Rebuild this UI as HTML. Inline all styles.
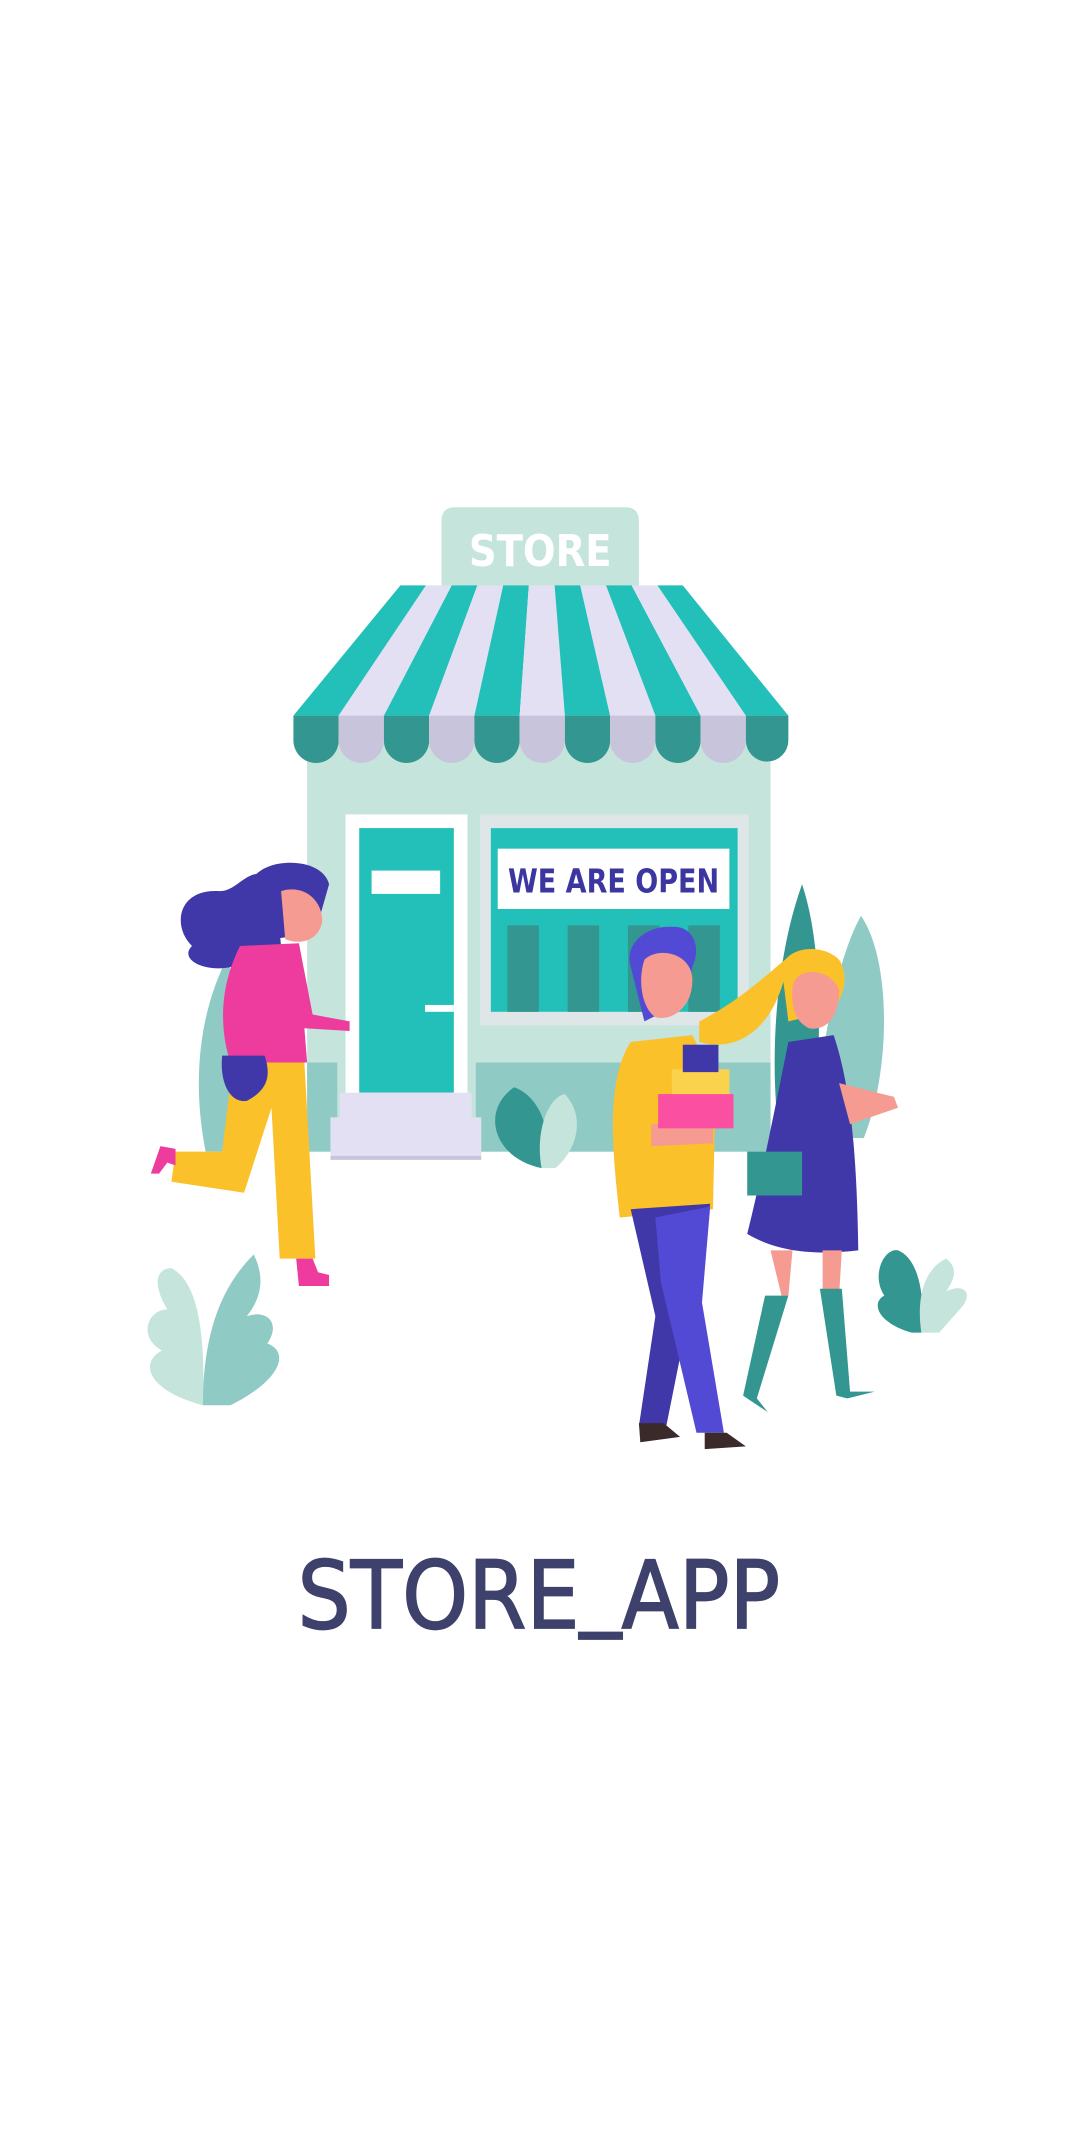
<!DOCTYPE html>
<html><head><meta charset="utf-8"><style>
html,body{margin:0;padding:0;background:#fff;width:1080px;height:2147px;overflow:hidden}
svg{display:block}
</style></head><body>
<svg width="1080" height="2147" viewBox="0 0 787.7 1566" xmlns="http://www.w3.org/2000/svg">
<rect width="787.7" height="1566" fill="#fff"/>
<!-- back plants -->
<path d="M150 840 C140 790 145 740 165 700 C185 740 195 790 185 840Z" fill="#90cac4"/>
<path d="M570 840 C560 780 565 700 585 645 C600 690 600 760 592 840Z" fill="#339690"/>
<path d="M592 830 C600 760 610 700 628 668 C650 700 650 780 630 830Z" fill="#90cac4"/>
<!-- building -->
<rect x="224" y="540" width="338" height="300" fill="#c5e4dc"/>
<rect x="347" y="775" width="215" height="65" fill="#90cac4"/>
<rect x="224" y="775" width="22" height="65" fill="#90cac4"/>
<!-- sign -->
<path d="M322 380 Q322 370 332 370 L456 370 Q466 370 466 380 L466 428 L322 428Z" fill="#c5e4dc"/>
<text x="394" y="413" text-anchor="middle" font-family="DejaVu Sans, sans-serif" font-weight="bold" font-size="32" fill="#fff" textLength="104" lengthAdjust="spacingAndGlyphs">STORE</text>
<!-- awning stripes -->
<g>
<polygon points="292,427 310.7,427 247,522 214,522" fill="#22c0b8"/>
<polygon points="310.7,427 329.5,427 280,522 247,522" fill="#e3e0f3"/>
<polygon points="329.5,427 348.2,427 313,522 280,522" fill="#22c0b8"/>
<polygon points="348.2,427 367,427 346,522 313,522" fill="#e3e0f3"/>
<polygon points="367,427 385.7,427 379,522 346,522" fill="#22c0b8"/>
<polygon points="385.7,427 404.5,427 412,522 379,522" fill="#e3e0f3"/>
<polygon points="404.5,427 423.2,427 445,522 412,522" fill="#22c0b8"/>
<polygon points="423.2,427 442,427 478,522 445,522" fill="#e3e0f3"/>
<polygon points="442,427 460.7,427 511,522 478,522" fill="#22c0b8"/>
<polygon points="460.7,427 479.5,427 544,522 511,522" fill="#e3e0f3"/>
<polygon points="479.5,427 498,427 575,522 544,522" fill="#22c0b8"/>
</g>
<g>
<path d="M214 522 H247 V540 A16.5 16.5 0 0 1 214 540Z" fill="#339690"/>
<path d="M247 522 H280 V540 A16.5 16.5 0 0 1 247 540Z" fill="#c8c4dc"/>
<path d="M280 522 H313 V540 A16.5 16.5 0 0 1 280 540Z" fill="#339690"/>
<path d="M313 522 H346 V540 A16.5 16.5 0 0 1 313 540Z" fill="#c8c4dc"/>
<path d="M346 522 H379 V540 A16.5 16.5 0 0 1 346 540Z" fill="#339690"/>
<path d="M379 522 H412 V540 A16.5 16.5 0 0 1 379 540Z" fill="#c8c4dc"/>
<path d="M412 522 H445 V540 A16.5 16.5 0 0 1 412 540Z" fill="#339690"/>
<path d="M445 522 H478 V540 A16.5 16.5 0 0 1 445 540Z" fill="#c8c4dc"/>
<path d="M478 522 H511 V540 A16.5 16.5 0 0 1 478 540Z" fill="#339690"/>
<path d="M511 522 H544 V540 A16.5 16.5 0 0 1 511 540Z" fill="#c8c4dc"/>
<path d="M544 522 H575 V540 A15.5 15.5 0 0 1 544 540Z" fill="#339690"/>
</g>
<!-- door -->
<rect x="252" y="594" width="89" height="206" fill="#fff"/>
<rect x="262" y="604" width="69" height="193" fill="#22c0b8"/>
<rect x="271" y="635" width="50" height="17" fill="#fff"/>
<rect x="310" y="733" width="21" height="5" fill="#fff"/>
<rect x="248" y="797" width="96" height="18" fill="#e3e0f3"/>
<rect x="241" y="815" width="110" height="28" fill="#e3e0f3"/>
<rect x="241" y="843" width="110" height="3" fill="#c8c4dc"/>
<!-- window -->
<rect x="350" y="594" width="196" height="154" fill="#dfe6e8"/>
<rect x="358" y="604" width="180" height="134" fill="#22c0b8"/>
<rect x="363" y="619" width="169" height="44" fill="#fff"/>
<text x="447.5" y="651" text-anchor="middle" font-family="DejaVu Sans, sans-serif" font-weight="bold" font-size="24" fill="#3b36a0" textLength="154" lengthAdjust="spacingAndGlyphs">WE ARE OPEN</text>
<rect x="370" y="675" width="23" height="63" fill="#339690"/>
<rect x="414" y="675" width="23" height="63" fill="#339690"/>
<rect x="458" y="675" width="23" height="63" fill="#339690"/>
<rect x="502" y="675" width="23" height="63" fill="#339690"/>
<!-- front center plant -->
<path d="M395 852 C360 845 350 810 375 793 C395 800 405 830 395 852Z" fill="#339690"/>
<path d="M395 852 C390 825 400 800 412 798 C428 815 420 840 405 852Z" fill="#c5e4dc"/>
<!-- left woman -->
<path d="M200 640 C180 630 175 650 160 650 C130 648 125 675 140 690 C130 700 150 710 170 705 L205 690Z" fill="#4038a8"/>
<path d="M185 640 C195 625 235 625 240 645 L230 680 L200 685Z" fill="#4038a8"/>
<path d="M205 650 C220 645 235 655 235 672 C233 685 220 690 208 685Z" fill="#f59b91"/>
<path d="M175 690 L218 688 L228 740 L255 745 L255 752 L222 750 L224 775 L168 775 C160 750 160 720 175 690Z" fill="#ee3c9e"/>
<path d="M170 775 L222 775 L230 918 L204 918 L198 808 L178 870 L125 862 L128 840 L162 840Z" fill="#fac12a"/>
<path d="M128 838 L117 836 L110 856 L116 856 L122 848 L128 850Z" fill="#ee3c9e"/>
<path d="M216 918 L228 918 L232 928 L240 930 L240 938 L218 938Z" fill="#ee3c9e"/>
<path d="M162 770 C160 790 168 805 180 803 C195 795 198 785 193 770Z" fill="#4038a8"/>
<!-- bottom-left plant -->
<path d="M148 1025 C110 1015 100 995 118 985 C100 975 108 955 122 955 C110 935 115 925 125 925 C145 935 150 975 148 1025Z" fill="#c5e4dc"/>
<path d="M148 1025 C148 975 160 940 185 915 C195 935 188 950 180 960 C195 955 205 965 195 980 C210 985 208 1005 168 1025Z" fill="#90cac4"/>
<!-- right plant -->
<path d="M665 972 C640 965 635 950 645 945 C635 930 645 910 655 912 C670 918 675 945 672 972Z" fill="#339690"/>
<path d="M672 972 C668 945 675 925 690 918 C700 925 695 935 690 942 C705 935 710 945 700 955 L685 972Z" fill="#c5e4dc"/>
<!-- man -->
<path d="M460 705 C455 690 470 675 490 676 C505 675 512 690 505 705 L500 730 L470 745Z" fill="#524ad4"/>
<path d="M470 700 C480 690 505 695 505 715 C505 735 490 745 478 742 C468 735 465 715 470 700Z" fill="#f59b91"/>
<path d="M460 760 L505 755 L522 790 L520 882 L452 888 C448 850 440 790 460 760Z" fill="#fac12a"/>
<path d="M475 820 L520 818 L520 834 L475 836Z" fill="#f59b91"/>
<rect x="480" y="798" width="55" height="25" fill="#fb4fa2"/>
<rect x="490" y="780" width="42" height="18" fill="#fbd24c"/>
<rect x="498" y="762" width="26" height="20" fill="#4038a8"/>
<path d="M460 882 L518 878 L502 960 L486 1040 L466 1040 L478 960Z" fill="#4038a8"/>
<path d="M478 888 L518 880 L512 950 L528 1045 L508 1045 L482 935Z" fill="#524ad4"/>
<path d="M466 1038 L484 1038 L496 1048 L467 1052Z" fill="#3a2a2a"/>
<path d="M514 1045 L530 1045 L544 1055 L514 1057Z" fill="#3a2a2a"/>
<!-- woman right -->
<path d="M510 745 C540 730 560 710 575 698 C570 740 545 770 510 760Z" fill="#fac12a"/>
<path d="M570 705 C575 690 600 688 612 700 C620 712 615 730 605 738 L575 745Z" fill="#fac12a"/>
<path d="M578 720 C580 705 605 705 612 722 C612 745 600 752 590 750 C580 745 577 735 578 720Z" fill="#f59b91"/>
<path d="M575 760 L608 755 C620 790 625 840 626 912 C600 915 570 915 545 900 C555 860 565 810 575 760Z" fill="#4038a8"/>
<path d="M612 790 L652 800 L655 808 L620 820Z" fill="#f59b91"/>
<path d="M545 840 L585 840 L585 872 L545 872Z" fill="#339690"/>
<path d="M562 912 L578 912 L575 945 L570 945Z" fill="#f59b91"/>
<path d="M600 912 L614 912 L612 945 L600 945Z" fill="#f59b91"/>
<path d="M558 945 L575 945 L552 1020 L560 1030 L542 1018Z" fill="#339690"/>
<path d="M598 940 L614 940 L620 1015 L638 1015 L618 1020 L610 1018Z" fill="#339690"/>
<!-- title -->
<text x="217" y="1187.5" font-family="DejaVu Sans, Liberation Sans, sans-serif" font-size="68" fill="#3d416b" stroke="#3d416b" stroke-width="1.2" textLength="352" lengthAdjust="spacingAndGlyphs">STORE<tspan dy="-8">_</tspan><tspan dy="8">APP</tspan></text>
</svg>
</body></html>
